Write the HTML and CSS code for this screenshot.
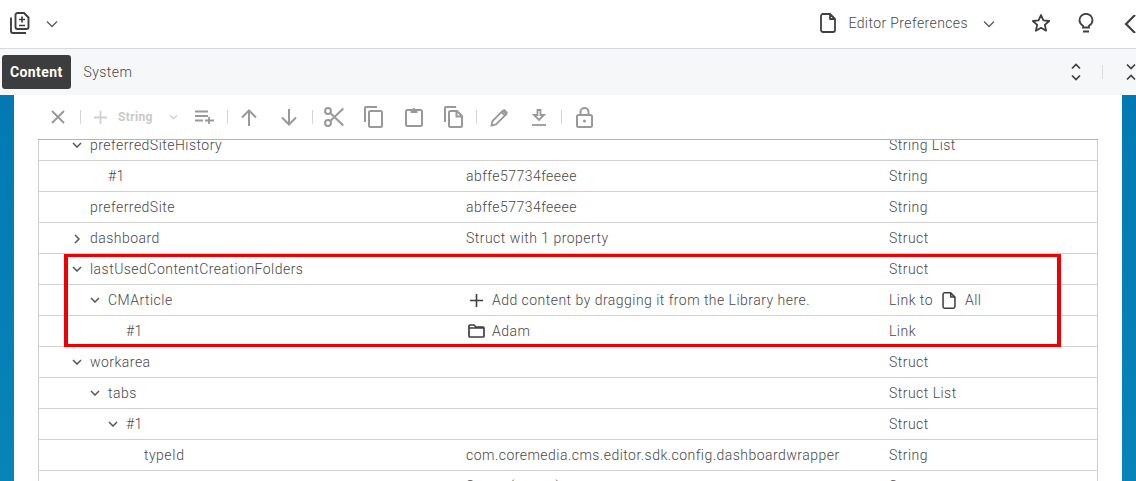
FILE: index.html
```html
<!DOCTYPE html>
<html lang="en">
<head>
<meta charset="utf-8">
<title>Editor Preferences</title>
<link rel="stylesheet" href="styles.css">
</head>
<body>
<svg class="defs" width="0" height="0" aria-hidden="true">
  <symbol id="doc" viewBox="0 0 16 20"><path d="M1 3a2 2 0 0 1 2-2h7l5 5v11a2 2 0 0 1-2 2H3a2 2 0 0 1-2-2z M10 1v5h5" fill="none" stroke="currentColor" stroke-width="1.800" stroke-linejoin="round"/></symbol>
  <symbol id="chev-down" viewBox="0 0 12 8"><path d="M1 1.500l5 5 5-5" fill="none" stroke="currentColor" stroke-width="1.300"/></symbol>
  <symbol id="tree-down" viewBox="0 0 10 6"><path d="M1 1l4 4 4-4" fill="none" stroke="currentColor" stroke-width="1.500"/></symbol>
  <symbol id="tree-right" viewBox="0 0 6 10"><path d="M1 1l4 4-4 4" fill="none" stroke="currentColor" stroke-width="1.500"/></symbol>
</svg>

<header class="topbar">
  <svg class="ic-lib" width="20" height="22" viewBox="0 0 20 22"><path d="M5.500 3a2 2 0 0 1 2-2h6.500l4.500 4.500V15a2 2 0 0 1-2 2h-9a2 2 0 0 1-2-2z M1 5.500V19a2 2 0 0 0 2 2h13" fill="none" stroke="#3f3f3f" stroke-width="1.900"/><path d="M9 7.500h6M12 4.500v6M9 13.500h6" fill="none" stroke="#3f3f3f" stroke-width="1.700"/></svg>
  <svg class="top-chev" width="12" height="8"><use href="#chev-down"/></svg>
  <div class="spacer"></div>
  <svg class="top-doc" width="16" height="20"><use href="#doc"/></svg>
  <span class="doc-name">Editor Preferences</span>
  <svg class="top-chev doc-chev" width="12" height="8"><use href="#chev-down"/></svg>
  <svg class="ic-star" width="20" height="20" viewBox="0 0 20 20"><path d="M10 2l2.400 5.400 5.800.6-4.400 3.900 1.300 5.800L10 14.700l-5.100 3 1.300-5.800L1.800 8l5.800-.6z" fill="none" stroke="#3f3f3f" stroke-width="1.800" stroke-linejoin="round"/></svg>
  <svg class="ic-bulb" width="16" height="20" viewBox="0 0 16 20"><path d="M5 14.500v-1.800C3 11.500 1.500 9.700 1.500 7.300a6.500 6.500 0 0 1 13 0c0 2.400-1.500 4.200-3.500 5.400v1.800z" fill="none" stroke="#3f3f3f" stroke-width="1.800"/><path d="M5 18.500h6" stroke="#3f3f3f" stroke-width="2"/></svg>
  <svg class="ic-back" width="14" height="18" viewBox="0 0 14 18"><path d="M12 0L3 9l9 9" fill="none" stroke="#3f3f3f" stroke-width="2.200"/></svg>
</header>

<nav class="tabbar">
  <button class="tab tab-active">Content</button>
  <button class="tab">System</button>
  <div class="spacer"></div>
  <svg class="ic-fold" width="10" height="18" viewBox="0 0 10 18"><path d="M1 5.500L5 1.500 9 5.500M1 12.500L5 16.500 9 12.500" fill="none" stroke="#3f3f3f" stroke-width="1.700"/></svg>
  <span class="tab-sep"></span>
  <svg class="ic-fold" width="10" height="18" viewBox="0 0 10 18"><path d="M1 1.500L5 5.500 9 1.500M1 16.500L5 12.500 9 16.500" fill="none" stroke="#3f3f3f" stroke-width="1.700"/></svg>
</nav>

<main class="stage">
  <div class="panel">
    <div class="toolbar">
      <svg class="tool t-close" width="16" height="16" viewBox="0 0 16 16"><path d="M2 2l12 12M14 2L2 14" fill="none" stroke="currentColor" stroke-width="2"/></svg>
      <span class="sep s1"></span>
      <svg class="tool t-plus dim" width="13" height="13" viewBox="0 0 13 13"><path d="M6.500 0v13M0 6.500h13" stroke="currentColor" stroke-width="1.800"/></svg>
      <span class="tb-label">String</span>
      <svg class="tool t-mini dim" width="9" height="6"><use href="#tree-down"/></svg>
      <svg class="tool t-addlist" width="20" height="14" viewBox="0 0 20 14"><path d="M0 1.500h13M0 6h13M0 10.500h8M14 7v7M10 10.500h9" fill="none" stroke="currentColor" stroke-width="1.800"/></svg>
      <span class="sep s2"></span>
      <svg class="tool t-arrow" width="16" height="17" viewBox="0 0 16 17"><path d="M8 17V1.500M1 8.500l7-7 7 7" fill="none" stroke="currentColor" stroke-width="2"/></svg>
      <svg class="tool t-arrow2" width="16" height="17" viewBox="0 0 16 17"><path d="M8 0v15.500M1 8.500l7 7 7-7" fill="none" stroke="currentColor" stroke-width="2"/></svg>
      <span class="sep s3"></span>
      <svg class="tool t-cut" width="20" height="20" viewBox="0 0 20 20"><circle cx="4" cy="4" r="2.900" fill="none" stroke="currentColor" stroke-width="2"/><circle cx="4" cy="16" r="2.900" fill="none" stroke="currentColor" stroke-width="2"/><path d="M6.300 6l13 12.500M6.300 14L19.300 1.500" fill="none" stroke="currentColor" stroke-width="2"/></svg>
      <svg class="tool t-copy" width="19" height="22" viewBox="0 0 19 22"><path d="M1 16V2a1 1 0 0 1 1-1h11" fill="none" stroke="currentColor" stroke-width="2"/><rect x="5" y="5" width="13" height="16" rx="1.500" fill="none" stroke="currentColor" stroke-width="2"/></svg>
      <svg class="tool t-paste" width="18" height="20" viewBox="0 0 18 20"><rect x="1" y="3" width="16" height="16" rx="1.500" fill="none" stroke="currentColor" stroke-width="2"/><path d="M5.500 6V2.500h2a1.500 1.500 0 0 1 3 0h2V6z" fill="currentColor"/></svg>
      <svg class="tool t-pastedoc" width="19" height="22" viewBox="0 0 19 22"><path d="M1 16V2a1 1 0 0 1 1-1h10" fill="none" stroke="currentColor" stroke-width="2"/><path d="M5 6.500a1.500 1.500 0 0 1 1.500-1.500H13l5 5v9.500a1.500 1.500 0 0 1-1.500 1.500h-10A1.500 1.500 0 0 1 5 19.500zM12.500 5v5.500H18" fill="none" stroke="currentColor" stroke-width="2"/></svg>
      <span class="sep s4"></span>
      <svg class="tool t-pen" width="19" height="19" viewBox="0 0 19 19"><path d="M1.500 17.500l1-4.500L13 2.500l3.500 3.500L6 16.500zM11.500 4l3.500 3.500" fill="none" stroke="currentColor" stroke-width="1.800"/><path d="M14.500 1l3.500 3.500-1.500 1.500L13 2.500z" fill="currentColor"/></svg>
      <svg class="tool t-dl" width="14" height="17" viewBox="0 0 14 17"><path d="M5.500 1h3v5H12l-5 5-5-5h3.500z" fill="none" stroke="currentColor" stroke-width="1.800"/><path d="M0 16h14" stroke="currentColor" stroke-width="1.800"/></svg>
      <span class="sep s5"></span>
      <svg class="tool t-lock" width="17" height="21" viewBox="0 0 17 21"><rect x="1" y="8" width="15" height="12" rx="1.500" fill="none" stroke="currentColor" stroke-width="2"/><path d="M4.500 8V5a4 4 0 0 1 8 0v3" fill="none" stroke="currentColor" stroke-width="2"/><circle cx="8.500" cy="14" r="1.500" fill="currentColor"/></svg>
    </div>

    <div class="table-wrap">
      <div class="table">
        <div class="row"><div class="c-name lv1"><svg class="tw" width="10" height="6"><use href="#tree-down"/></svg>preferredSiteHistory</div><div class="c-value"></div><div class="c-type">String List</div></div>
        <div class="row"><div class="c-name lv2">#1</div><div class="c-value">abffe57734feeee</div><div class="c-type">String</div></div>
        <div class="row"><div class="c-name lv1">preferredSite</div><div class="c-value">abffe57734feeee</div><div class="c-type">String</div></div>
        <div class="row"><div class="c-name lv1"><svg class="tw tw-r" width="6" height="10"><use href="#tree-right"/></svg>dashboard</div><div class="c-value">Struct with 1 property</div><div class="c-type">Struct</div></div>
        <div class="row"><div class="c-name lv1"><svg class="tw" width="10" height="6"><use href="#tree-down"/></svg>lastUsedContentCreationFolders</div><div class="c-value"></div><div class="c-type">Struct</div></div>
        <div class="row"><div class="c-name lv2"><svg class="tw" width="10" height="6"><use href="#tree-down"/></svg>CMArticle</div><div class="c-value"><svg class="val-ic" width="13" height="13" viewBox="0 0 13 13"><path d="M6.500 0v13M0 6.500h13" stroke="#3f3f3f" stroke-width="1.600"/></svg>Add content by dragging it from the Library here.</div><div class="c-type">Link to<svg class="type-doc" width="14" height="17"><use href="#doc"/></svg>All</div></div>
        <div class="row"><div class="c-name lv3">#1</div><div class="c-value"><svg class="val-ic val-folder" width="17" height="14" viewBox="0 0 17 14"><path d="M1 12V2a1 1 0 0 1 1-1h4l2 2h7a1 1 0 0 1 1 1v8a1 1 0 0 1-1 1H2a1 1 0 0 1-1-1zM1 4h15" fill="none" stroke="#3f3f3f" stroke-width="1.700"/></svg>Adam</div><div class="c-type">Link</div></div>
        <div class="row"><div class="c-name lv1"><svg class="tw" width="10" height="6"><use href="#tree-down"/></svg>workarea</div><div class="c-value"></div><div class="c-type">Struct</div></div>
        <div class="row"><div class="c-name lv2"><svg class="tw" width="10" height="6"><use href="#tree-down"/></svg>tabs</div><div class="c-value"></div><div class="c-type">Struct List</div></div>
        <div class="row"><div class="c-name lv3"><svg class="tw" width="10" height="6"><use href="#tree-down"/></svg>#1</div><div class="c-value"></div><div class="c-type">Struct</div></div>
        <div class="row"><div class="c-name lv4">typeId</div><div class="c-value">com.coremedia.cms.editor.sdk.config.dashboardwrapper</div><div class="c-type">String</div></div>
        <div class="row"><div class="c-name lv4"></div><div class="c-value">Struct (empty)</div><div class="c-type">Struct</div></div>
      </div>
    </div>
  </div>
  <div class="highlight"></div>
</main>
</body>
</html>
```
FILE: styles.css
```css
* { box-sizing: border-box; }
html, body { margin: 0; height: 100%; }
body {
  display: flex;
  flex-direction: column;
  height: 481px;
  overflow: hidden;
  font-family: Roboto, "Liberation Sans", sans-serif;
  font-size: 14px;
  font-weight: 300;
  letter-spacing: .47px;
  color: #484848;
  background: #fff;
}
.defs { position: absolute; }
.spacer { flex: 1; }

.topbar {
  flex: none;
  height: 49px;
  display: flex;
  align-items: center;
  padding-left: 10px;
  border-bottom: 1px solid #d8dade;
  background: #fff;
  overflow: hidden;
}
.ic-lib { flex: none; margin-top: -2px; }
.top-chev { flex: none; color: #5a5a5a; margin-left: 16px; }
.top-doc { flex: none; color: #3f3f3f; margin-top: -2px; }
.doc-name { margin: -2px 0 0 12px; letter-spacing: .4px; }
.doc-chev { margin-left: 15px; }
.ic-star { flex: none; margin: -2px 0 0 36px; }
.ic-bulb { flex: none; margin: -2px 0 0 27px; }
.ic-back { flex: none; margin: -1px -1px 0 29px; }

.tabbar {
  flex: none;
  height: 46px;
  display: flex;
  align-items: center;
  padding-left: 2px;
  background: #f6f7f9;
  overflow: hidden;
}
.tab {
  height: 34px;
  padding: 0 8px;
  border: 0;
  border-radius: 3px;
  background: none;
  font: 300 14px Roboto, sans-serif;
  letter-spacing: .4px;
  color: #484848;
}
.tab-active {
  margin-right: 5px;
  background: #3d3d3d;
  color: #fff;
  font-weight: 700;
}
.ic-fold { flex: none; }
.tab-sep { width: 1px; height: 14px; margin: 0 23px 0 21px; background: #d8dade; }

.stage {
  position: relative;
  flex: 1;
  min-height: 0;
  padding: 0 14px;
  background: linear-gradient(#0279b2, #0884b8);
}
.panel {
  height: 100%;
  padding: 0 24px;
  display: flex;
  flex-direction: column;
  background: #fff;
}
.toolbar {
  flex: none;
  height: 45px;
  display: flex;
  align-items: center;
  color: #999;
  border-bottom: 1px solid #b4b4b4;
}
.tool { flex: none; }
.dim { color: #d0d0d0; }
.sep { flex: none; width: 1px; height: 14px; background: #d4d4d4; }
.t-close { margin-left: 12px; }
.s1 { margin-left: 14px; }
.t-plus { margin-left: 13px; }
.tb-label { margin-left: 11px; font-size: 12px; font-weight: 700; letter-spacing: .35px; color: #c9c9c9; }
.t-mini { margin-left: 16px; }
.t-addlist { margin-left: 17px; }
.s2 { margin-left: 12px; }
.t-arrow { margin-left: 13px; }
.t-arrow2 { margin-left: 24px; }
.s3 { margin-left: 15px; }
.t-cut { margin-left: 11px; }
.t-copy { margin-left: 20px; }
.t-paste { margin-left: 22px; }
.t-pastedoc { margin-left: 21px; }
.s4 { margin-left: 13px; }
.t-pen { margin-left: 13px; }
.t-dl { margin-left: 23px; }
.s5 { margin-left: 15px; }
.t-lock { margin-left: 14px; }

.table-wrap {
  flex: 1;
  min-height: 0;
  overflow: hidden;
}
.table {
  margin-top: -10px;
  border-left: 1px solid #cfcfcf;
  border-right: 1px solid #cfcfcf;
}
.row {
  height: 31px;
  display: grid;
  grid-template-columns: 427px 423px 1fr;
  align-items: center;
  border-bottom: 1px solid #d0d0d0;
  line-height: 30px;
  white-space: nowrap;
}
.lv1 { padding-left: 51px; }
.lv2 { padding-left: 69px; }
.lv3 { padding-left: 87px; }
.lv4 { padding-left: 105px; }
.tw { margin-left: -18px; margin-right: 8px; vertical-align: 2px; color: #555; }
.tw-r { margin-left: -16px; margin-right: 10px; vertical-align: -1px; }
.val-ic { margin-left: 4px; margin-right: 9px; vertical-align: -2px; }
.val-folder { margin-left: 2px; margin-right: 7px; vertical-align: -2px; }
.type-doc { color: #3f3f3f; margin: 0 9px 0 9px; vertical-align: -4px; }

.highlight {
  position: absolute;
  left: 64px;
  top: 159px;
  width: 997px;
  height: 93px;
  border-style: solid;
  border-color: #ee0000;
  border-width: 3px 4px;
  pointer-events: none;
}
```
